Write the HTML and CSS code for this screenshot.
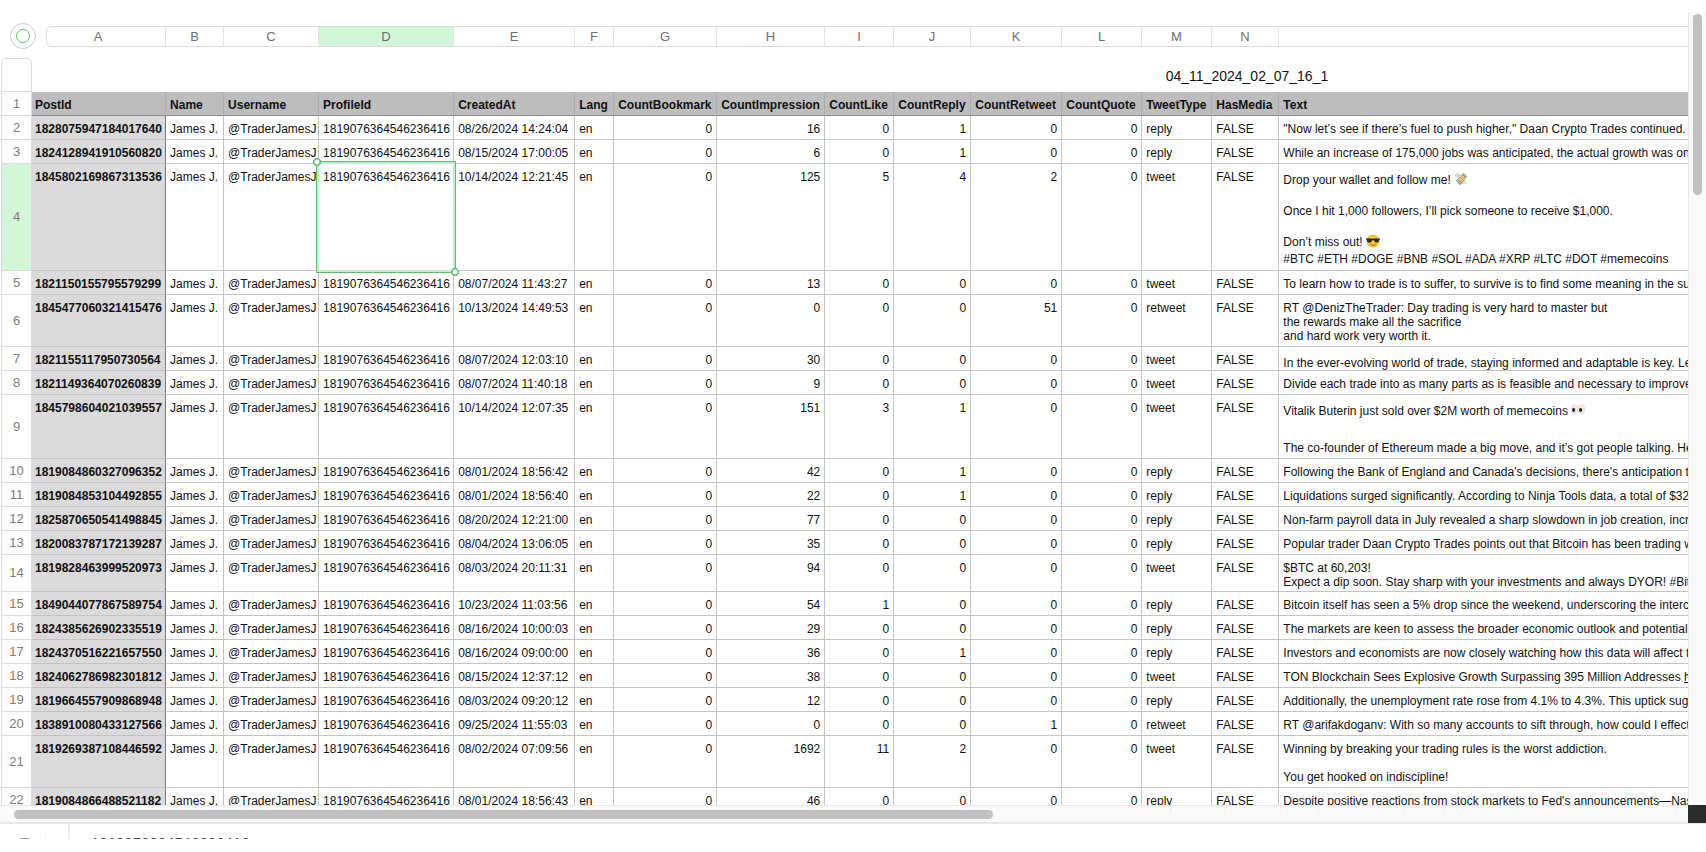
FILE: index.html
```
<!DOCTYPE html>
<html lang="en">
<head>
  <meta charset="UTF-8">
  <meta name="viewport" content="width=device-width, initial-scale=1.0">
  <title>04_11_2024_02_07_16_1</title>
  <link rel="stylesheet" href="styles.css">
</head>
<body>

<main class="window">
  <div class="view">
    <div class="letters">
      <button class="handle" aria-label="Select table"></button>
      <div class="strip">
        <span class="a">A</span><span class="b">B</span><span class="c">C</span><span class="d active">D</span><span class="e">E</span><span class="f">F</span><span class="g">G</span><span class="h">H</span><span class="i">I</span><span class="j">J</span><span class="k">K</span><span class="l">L</span><span class="m">M</span><span class="n">N</span><span class="o"></span>
      </div>
    </div>

    <table>
      <colgroup>
        <col class="num"><col class="a"><col class="b"><col class="c"><col class="d"><col class="e"><col class="f"><col class="g"><col class="h"><col class="i"><col class="j"><col class="k"><col class="l"><col class="m"><col class="n"><col class="o">
      </colgroup>
      <thead>
        <tr class="title"><td class="corner"></td><th colspan="15">04_11_2024_02_07_16_1</th></tr>
        <tr class="names"><th>1</th><th>PostId</th><th>Name</th><th>Username</th><th>ProfileId</th><th>CreatedAt</th><th>Lang</th><th>CountBookmark</th><th>CountImpression</th><th>CountLike</th><th>CountReply</th><th>CountRetweet</th><th>CountQuote</th><th>TweetType</th><th>HasMedia</th><th>Text</th></tr>
      </thead>
      <tbody>
        <tr><th>2</th><th>1828075947184017640</th><td>James J.</td><td>@TraderJamesJ</td><td>1819076364546236416</td><td>08/26/2024 14:24:04</td><td>en</td><td>0</td><td>16</td><td>0</td><td>1</td><td>0</td><td>0</td><td>reply</td><td>FALSE</td><td>"Now let’s see if there’s fuel to push higher," Daan Crypto Trades continued.</td></tr>
        <tr><th>3</th><th>1824128941910560820</th><td>James J.</td><td>@TraderJamesJ</td><td>1819076364546236416</td><td>08/15/2024 17:00:05</td><td>en</td><td>0</td><td>6</td><td>0</td><td>1</td><td>0</td><td>0</td><td>reply</td><td>FALSE</td><td>While an increase of 175,000 jobs was anticipated, the actual growth was on</td></tr>
        <tr class="r4"><th class="active">4</th><th>1845802169867313536</th><td>James J.</td><td>@TraderJamesJ</td><td class="selected">1819076364546236416</td><td>10/14/2024 12:21:45</td><td>en</td><td>0</td><td>125</td><td>5</td><td>4</td><td>2</td><td>0</td><td>tweet</td><td>FALSE</td><td>
          <p class="tall">Drop your wallet and follow me! <svg class="emoji" viewBox="0 0 16 16" role="img" aria-label="money with wings"><path fill="#d9dcd2" d="M0 4 3 1l4 1 2 3-4 3zM8 14l7-1-2-4-4 1z"/><path fill="#8b9872" d="m2 10 9-9 4 4-8 10z"/><path fill="#c9d1a8" d="m3 10 8-8 3 3-7 8z"/><path fill="#e3b95c" d="m6 6 2-2 4 4-2 3z"/><path fill="none" stroke="#65704f" d="m5 9 3 3M10 3l3 3"/></svg></p>
          <p><br></p>
          <p>Once I hit 1,000 followers, I’ll pick someone to receive $1,000.</p>
          <p><br></p>
          <p class="tall">Don’t miss out! <svg class="emoji" viewBox="0 0 16 16" role="img" aria-label="smiling face with sunglasses"><circle cx="8" cy="8" r="7.5" fill="#f6c343"/><path fill="#2b2724" d="M0 5h16v1l-1 1c0 3-5 4-6 0H7c-1 4-6 3-6 0L0 6z"/><path fill="none" stroke="#8a5516" d="M5 11.500c2 2 4 2 6 0"/></svg></p>
          <p>#BTC #ETH #DOGE #BNB #SOL #ADA #XRP #LTC #DOT #memecoins</p></td></tr>
        <tr><th>5</th><th>1821150155795579299</th><td>James J.</td><td>@TraderJamesJ</td><td>1819076364546236416</td><td>08/07/2024 11:43:27</td><td>en</td><td>0</td><td>13</td><td>0</td><td>0</td><td>0</td><td>0</td><td>tweet</td><td>FALSE</td><td>To learn how to trade is to suffer, to survive is to find some meaning in the su</td></tr>
        <tr class="r6"><th>6</th><th>1845477060321415476</th><td>James J.</td><td>@TraderJamesJ</td><td>1819076364546236416</td><td>10/13/2024 14:49:53</td><td>en</td><td>0</td><td>0</td><td>0</td><td>0</td><td>51</td><td>0</td><td>retweet</td><td>FALSE</td><td>
          <p>RT @DenizTheTrader: Day trading is very hard to master but</p>
          <p>the rewards make all the sacrifice</p>
          <p>and hard work very worth it.</p></td></tr>
        <tr><th>7</th><th>1821155117950730564</th><td>James J.</td><td>@TraderJamesJ</td><td>1819076364546236416</td><td>08/07/2024 12:03:10</td><td>en</td><td>0</td><td>30</td><td>0</td><td>0</td><td>0</td><td>0</td><td>tweet</td><td>FALSE</td><td class="low">In the ever-evolving world of trade, staying informed and adaptable is key. Le</td></tr>
        <tr><th>8</th><th>1821149364070260839</th><td>James J.</td><td>@TraderJamesJ</td><td>1819076364546236416</td><td>08/07/2024 11:40:18</td><td>en</td><td>0</td><td>9</td><td>0</td><td>0</td><td>0</td><td>0</td><td>tweet</td><td>FALSE</td><td>Divide each trade into as many parts as is feasible and necessary to improve</td></tr>
        <tr class="r9"><th>9</th><th>1845798604021039557</th><td>James J.</td><td>@TraderJamesJ</td><td>1819076364546236416</td><td>10/14/2024 12:07:35</td><td>en</td><td>0</td><td>151</td><td>3</td><td>1</td><td>0</td><td>0</td><td>tweet</td><td>FALSE</td><td>
          <p class="tall">Vitalik Buterin just sold over $2M worth of memecoins <svg class="emoji" viewBox="0 0 16 16" role="img" aria-label="eyes"><g fill="#f1ece8" stroke="#d5ccc5" stroke-width=".6"><ellipse cx="4" cy="7.500" rx="3.500" ry="5.500"/><ellipse cx="12" cy="7.500" rx="3.500" ry="5.500"/></g><g fill="#2e2119"><ellipse cx="3" cy="8" rx="1.800" ry="2.300"/><ellipse cx="11" cy="8" rx="1.800" ry="2.300"/></g></svg></p>
          <p class="tall"><br></p>
          <p>The co-founder of Ethereum made a big move, and it’s got people talking. He</p></td></tr>
        <tr><th>10</th><th>1819084860327096352</th><td>James J.</td><td>@TraderJamesJ</td><td>1819076364546236416</td><td>08/01/2024 18:56:42</td><td>en</td><td>0</td><td>42</td><td>0</td><td>1</td><td>0</td><td>0</td><td>reply</td><td>FALSE</td><td>Following the Bank of England and Canada's decisions, there's anticipation t</td></tr>
        <tr><th>11</th><th>1819084853104492855</th><td>James J.</td><td>@TraderJamesJ</td><td>1819076364546236416</td><td>08/01/2024 18:56:40</td><td>en</td><td>0</td><td>22</td><td>0</td><td>1</td><td>0</td><td>0</td><td>reply</td><td>FALSE</td><td>Liquidations surged significantly. According to Ninja Tools data, a total of $32</td></tr>
        <tr><th>12</th><th>1825870650541498845</th><td>James J.</td><td>@TraderJamesJ</td><td>1819076364546236416</td><td>08/20/2024 12:21:00</td><td>en</td><td>0</td><td>77</td><td>0</td><td>0</td><td>0</td><td>0</td><td>reply</td><td>FALSE</td><td>Non-farm payroll data in July revealed a sharp slowdown in job creation, incr</td></tr>
        <tr><th>13</th><th>1820083787172139287</th><td>James J.</td><td>@TraderJamesJ</td><td>1819076364546236416</td><td>08/04/2024 13:06:05</td><td>en</td><td>0</td><td>35</td><td>0</td><td>0</td><td>0</td><td>0</td><td>reply</td><td>FALSE</td><td>Popular trader Daan Crypto Trades points out that Bitcoin has been trading w</td></tr>
        <tr class="r14"><th>14</th><th>1819828463999520973</th><td>James J.</td><td>@TraderJamesJ</td><td>1819076364546236416</td><td>08/03/2024 20:11:31</td><td>en</td><td>0</td><td>94</td><td>0</td><td>0</td><td>0</td><td>0</td><td>tweet</td><td>FALSE</td><td>
          <p>$BTC at 60,203!</p>
          <p>Expect a dip soon. Stay sharp with your investments and always DYOR! #Bit</p></td></tr>
        <tr><th>15</th><th>1849044077867589754</th><td>James J.</td><td>@TraderJamesJ</td><td>1819076364546236416</td><td>10/23/2024 11:03:56</td><td>en</td><td>0</td><td>54</td><td>1</td><td>0</td><td>0</td><td>0</td><td>reply</td><td>FALSE</td><td>Bitcoin itself has seen a 5% drop since the weekend, underscoring the interc</td></tr>
        <tr><th>16</th><th>1824385626902335519</th><td>James J.</td><td>@TraderJamesJ</td><td>1819076364546236416</td><td>08/16/2024 10:00:03</td><td>en</td><td>0</td><td>29</td><td>0</td><td>0</td><td>0</td><td>0</td><td>reply</td><td>FALSE</td><td>The markets are keen to assess the broader economic outlook and potential</td></tr>
        <tr><th>17</th><th>1824370516221657550</th><td>James J.</td><td>@TraderJamesJ</td><td>1819076364546236416</td><td>08/16/2024 09:00:00</td><td>en</td><td>0</td><td>36</td><td>0</td><td>1</td><td>0</td><td>0</td><td>reply</td><td>FALSE</td><td>Investors and economists are now closely watching how this data will affect t</td></tr>
        <tr><th>18</th><th>1824062786982301812</th><td>James J.</td><td>@TraderJamesJ</td><td>1819076364546236416</td><td>08/15/2024 12:37:12</td><td>en</td><td>0</td><td>38</td><td>0</td><td>0</td><td>0</td><td>0</td><td>tweet</td><td>FALSE</td><td>TON Blockchain Sees Explosive Growth Surpassing 395 Million Addresses <a href="#">h</a></td></tr>
        <tr><th>19</th><th>1819664557909868948</th><td>James J.</td><td>@TraderJamesJ</td><td>1819076364546236416</td><td>08/03/2024 09:20:12</td><td>en</td><td>0</td><td>12</td><td>0</td><td>0</td><td>0</td><td>0</td><td>reply</td><td>FALSE</td><td>Additionally, the unemployment rate rose from 4.1% to 4.3%. This uptick sug</td></tr>
        <tr><th>20</th><th>1838910080433127566</th><td>James J.</td><td>@TraderJamesJ</td><td>1819076364546236416</td><td>09/25/2024 11:55:03</td><td>en</td><td>0</td><td>0</td><td>0</td><td>0</td><td>1</td><td>0</td><td>retweet</td><td>FALSE</td><td>RT @arifakdoganv: With so many accounts to sift through, how could I effect</td></tr>
        <tr class="r21"><th>21</th><th>1819269387108446592</th><td>James J.</td><td>@TraderJamesJ</td><td>1819076364546236416</td><td>08/02/2024 07:09:56</td><td>en</td><td>0</td><td>1692</td><td>11</td><td>2</td><td>0</td><td>0</td><td>tweet</td><td>FALSE</td><td>
          <p>Winning by breaking your trading rules is the worst addiction.</p>
          <p><br></p>
          <p>You get hooked on indiscipline!</p></td></tr>
        <tr><th>22</th><th>1819084866488521182</th><td>James J.</td><td>@TraderJamesJ</td><td>1819076364546236416</td><td>08/01/2024 18:56:43</td><td>en</td><td>0</td><td>46</td><td>0</td><td>0</td><td>0</td><td>0</td><td>reply</td><td>FALSE</td><td>Despite positive reactions from stock markets to Fed's announcements—Nas</td></tr>
      </tbody>
    </table>
  </div>

  <div class="vbar"><div class="thumb"></div></div>
  <div class="hbar"><div class="thumb"></div></div>
  <div class="grip"></div>
</main>

<footer>
  <span class="kind">Text</span>
  <span class="value">1819076364546236416</span>
</footer>

</body>
</html>
```
FILE: styles.css
```
* { box-sizing: border-box; }

body {
  margin: 0;
  height: 100vh;
  padding: 12px 0 13px;
  display: flex;
  flex-direction: column;
  overflow: hidden;
  background: #fff;
  color: #111;
  font: 12px/14px "Liberation Sans", Arial, Helvetica, sans-serif;
}

/* sheet + scrollbars */
.window {
  flex: 1;
  min-height: 0;
  display: grid;
  grid-template-columns: minmax(0, 1fr) 18px;
  grid-template-rows: minmax(0, 1fr) 18px;
}
.view {
  overflow: hidden;
  padding: 12px 0 0 1px;
}

/* column widths, shared by the letters and the table */
.num { width: 31px; }
.a { width: 134px; }
.b { width: 58px; }
.c { width: 95px; }
.d { width: 135px; }
.e { width: 121px; }
.f { width: 39px; }
.g { width: 103px; }
.h { width: 108px; }
.i { width: 69px; }
.j { width: 77px; }
.k { width: 91px; }
.l { width: 80px; }
.m { width: 70px; }
.n { width: 67px; }
.o { width: 1182px; }

.letters {
  display: flex;
  align-items: center;
  width: 2461px;
  height: 24px;
  padding-left: 9px;
  margin-bottom: 10px;
}
.handle {
  flex: none;
  display: grid;
  place-items: center;
  width: 26px;
  height: 26px;
  margin-right: 10px;
  padding: 0;
  border: 1px solid #c8c8c8;
  border-radius: 50%;
  background: #fff;
}
.handle::before {
  content: "";
  width: 12px;
  height: 12px;
  border: 1px solid #5fc277;
  border-radius: 50%;
}
.strip {
  display: flex;
  height: 21px;
  border: 1px solid #dcdcdc;
  border-radius: 5px;
  color: #6e6e6e;
  font-size: 13px;
  line-height: 19px;
  text-align: center;
}
.strip span {
  flex: none;
  border-right: 1px solid #e2e2e2;
}
.strip .a {
  width: 119px;
  padding-right: 16px;
}
.strip .active { background: #d3f6d9; }

table {
  table-layout: fixed;
  width: 2461px;
  border-collapse: separate;
  border-spacing: 0;
}
td, th {
  height: 24px;
  padding: 6px 4px 0;
  border: 0 solid #c4c4c4;
  border-width: 0 1px 1px 0;
  text-align: left;
  vertical-align: top;
  white-space: nowrap;
}
p { margin: 0; }
.tall { line-height: 20px; }
.low { padding-top: 10px; line-height: 13px; }
a { color: inherit; }

.title th {
  height: 34px;
  padding-top: 11px;
  border: 0;
  font-size: 14px;
  font-weight: normal;
  text-align: center;
}
.title .corner {
  border: 1px solid #dcdcdc;
  border-radius: 5px 5px 0 0;
}
.names th {
  background: #bdbdbd;
  border-color: #adadad;
  border-bottom-color: #8c8c8c;
}

/* counts */
tbody td:nth-child(n+8):nth-child(-n+13) { text-align: right; }

/* row numbers */
tr:not(.title) th:first-child {
  padding: 0;
  border-color: #dcdcdc;
  border-left-width: 1px;
  background: #fff;
  color: #7c7c7c;
  font-size: 13px;
  font-weight: normal;
  text-align: center;
  vertical-align: middle;
}
tr:not(.title) th.active:first-child { background: #d3f6d9; }

tr:not(.title) th:nth-child(2) { padding-left: 3px; }
tbody th:nth-child(2) {
  background: #dadada;
  border-right-color: #777;
}

.r4 td { height: 107px; }
.r6 td { height: 52px; }
.r9 td { height: 64px; }
.r14 td { height: 37px; }
.r21 td { height: 52px; }

.emoji {
  width: 14px;
  height: 14px;
  vertical-align: -2px;
}

/* selection frame with its two handles */
.selected { position: relative; }
.selected::before {
  content: "";
  position: absolute;
  inset: -3px;
  border: 1px solid #5fb873;
  box-shadow: inset 0 0 0 2px #c4efcc;
}
.selected::after {
  content: "";
  position: absolute;
  inset: -6px;
  background:
    radial-gradient(circle, #fff 0 2px, #5fc277 3px 4px, transparent 4px) 0 0 / 8px 8px no-repeat,
    radial-gradient(circle, #fff 0 2px, #5fc277 3px 4px, transparent 4px) 100% 100% / 8px 8px no-repeat;
}

.vbar {
  padding: 2px 4px;
  border-left: 1px solid #e8e8e8;
  background: #f9f9f9;
}
.vbar .thumb {
  height: 23%;
  width: 9px;
  border-radius: 5px;
  background: #c1c1c1;
}
.hbar {
  padding: 4px 14px;
  border: 0 solid #e8e8e8;
  border-width: 1px 0;
  background: #f9f9f9;
}
.hbar .thumb {
  width: 59%;
  height: 9px;
  border-radius: 5px;
  background: #c1c1c1;
}
.grip { background: #2b2b2b; }

footer {
  display: flex;
  height: 16px;
  overflow: hidden;
  border-top: 1px solid #e8e8e8;
  font-size: 15px;
  line-height: 17px;
}
.kind {
  width: 70px;
  padding: 10px 0 0 20px;
  border-right: 2px solid #ececec;
  color: #999;
}
.value {
  padding: 10px 0 0 21px;
  color: #444;
}
```
